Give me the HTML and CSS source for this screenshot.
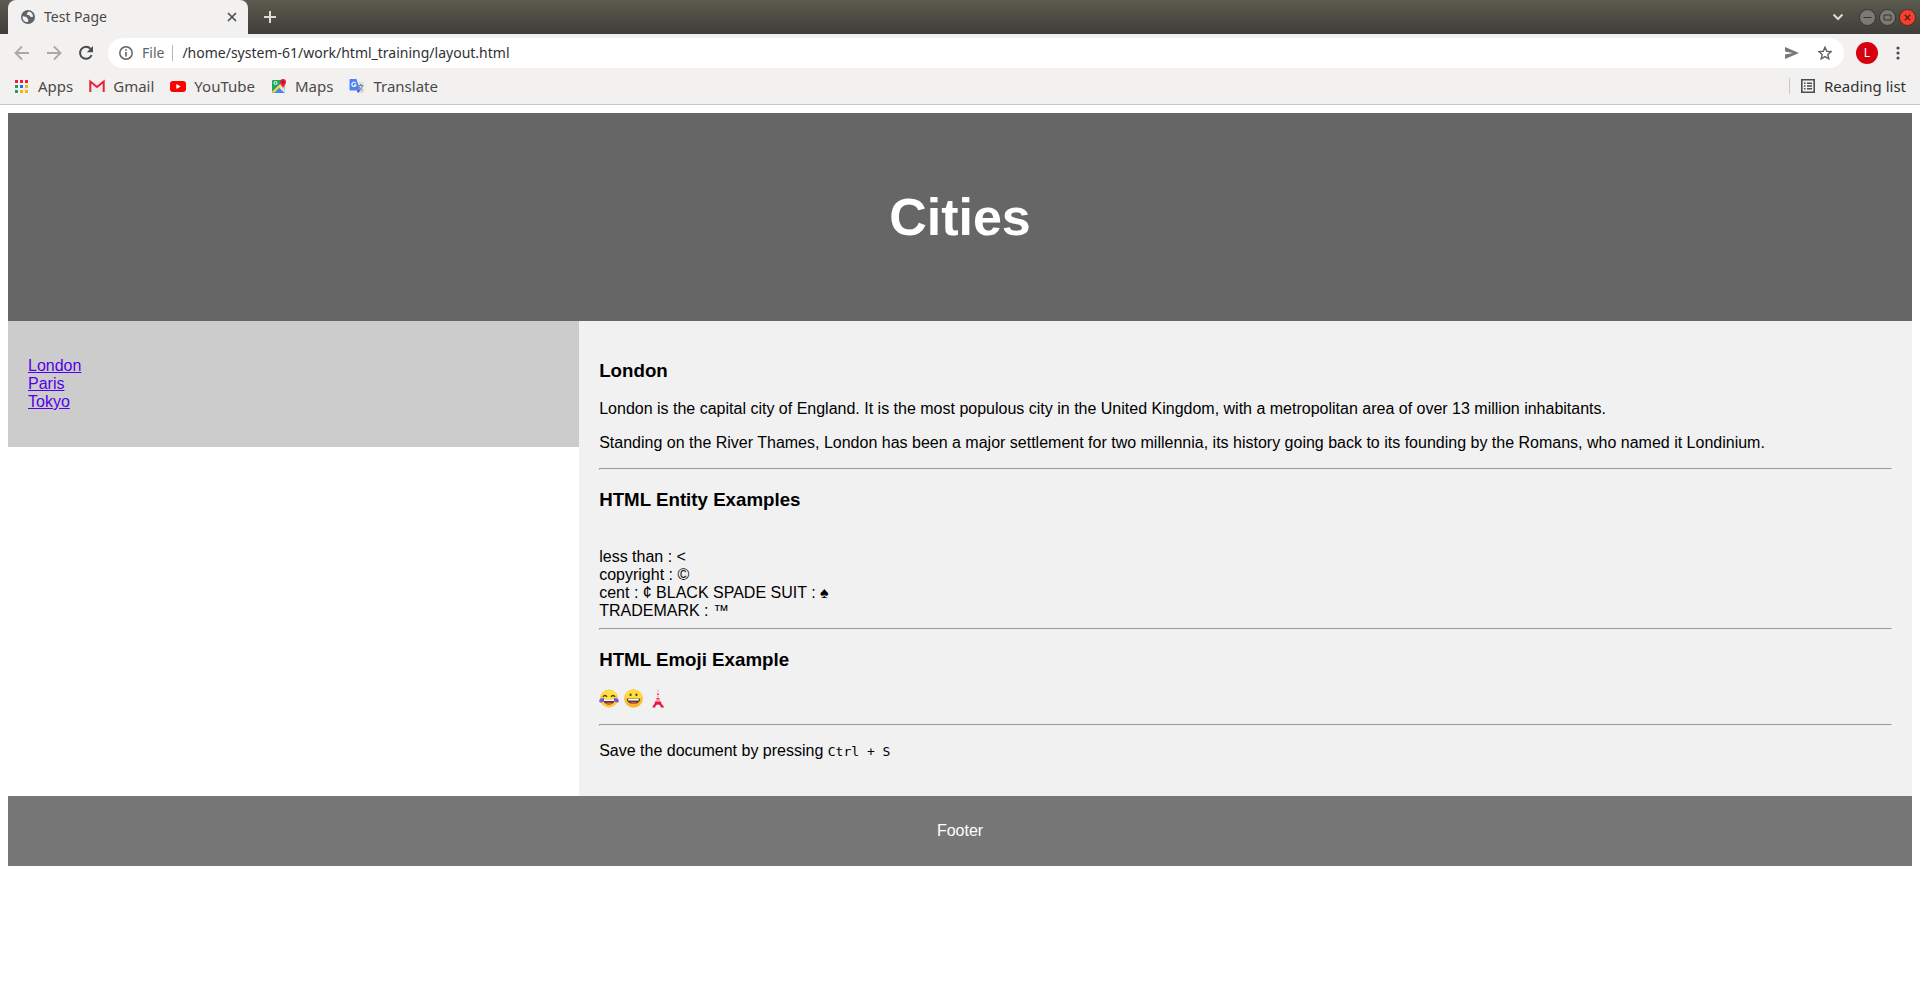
FILE: index.html
```html
<!DOCTYPE html>
<html lang="en">
<head>
<meta charset="utf-8">
<title>Test Page</title>
<link rel="stylesheet" href="styles.css">
</head>
<body>
<div class="chrome">
  <div class="tabstrip">
    <div class="tab">
      <svg class="globe" width="14" height="14" viewBox="0 0 14 14"><circle cx="7" cy="7" r="7" fill="#5f6368"/><path d="M1.6 6.2c1.2.2 2.7.5 3.8.9.9.4.5 1.6 1.5 1.9.6.3.3 1.4.1 2.9C4 12.600 1 10 1.600 6.200zM7.200 1.700c-1.100.7-.4 1.500-1.300 2.100-.5.5.2 1.300 1.100 1.200 1 .1 1.600.4 2 1.300.5 1 1.900.8 2.900.500C12.300 3.700 9.900 1.600 7.200 1.700z" fill="#f2f1f0"/></svg>
      <span class="tab-title">Test Page</span>
      <button class="bare" aria-label="Close tab"><svg width="10" height="10" viewBox="0 0 10 10"><path d="M1 1l8 8M9 1L1 9" stroke="#4a4d51" stroke-width="1.700"/></svg></button>
    </div>
    <button class="bare new-tab" aria-label="New tab"><svg width="12" height="12" viewBox="0 0 12 12"><path d="M6 0v12M0 6h12" stroke="#dfdbd2" stroke-width="2"/></svg></button>
    <div class="window-controls">
      <button class="bare search-tabs" aria-label="Search tabs"><svg width="12" height="8" viewBox="0 0 12 8"><path d="M1.500 1.500L6 6l4.500-4.500" fill="none" stroke="#dfdbd2" stroke-width="2"/></svg></button>
      <button class="bare" aria-label="Minimize"><svg width="17" height="17" viewBox="0 0 17 17"><circle cx="8.500" cy="8.500" r="8" fill="#7c7a73" stroke="#34332e"/><path d="M4.500 8.500h8" stroke="#34332e"/></svg></button>
      <button class="bare" aria-label="Maximize"><svg width="17" height="17" viewBox="0 0 17 17"><circle cx="8.500" cy="8.500" r="8" fill="#7c7a73" stroke="#34332e"/><path d="M5 6h7v5H5z" fill="none" stroke="#34332e"/></svg></button>
      <button class="bare" aria-label="Close"><svg width="17" height="17" viewBox="0 0 17 17"><circle cx="8.500" cy="8.500" r="8" fill="#f6402f" stroke="#5a251c"/><path d="M5.800 5.800l5.400 5.400M11.200 5.800l-5.400 5.400" stroke="#5c1b10" stroke-width="1.300"/></svg></button>
    </div>
  </div>
  <div class="toolbar">
    <button class="bare" aria-label="Back"><svg width="16" height="16" viewBox="0 0 16 16"><path d="M15 8H2M8 1.500L1.500 8 8 14.500" fill="none" stroke="#aaa9a7" stroke-width="1.800"/></svg></button>
    <button class="bare" aria-label="Forward"><svg width="16" height="16" viewBox="0 0 16 16"><path d="M1 8h13M8 1.500L14.500 8 8 14.500" fill="none" stroke="#aaa9a7" stroke-width="1.800"/></svg></button>
    <button class="bare" aria-label="Reload"><svg width="16" height="16" viewBox="0 0 16 16"><path d="M13.600 10.200A6 6 0 1 1 12.600 3.900" fill="none" stroke="#4a4d51" stroke-width="2"/><path d="M15 1v6.200H8.800z" fill="#4a4d51"/></svg></button>
    <div class="omnibox">
      <svg width="14" height="14" viewBox="0 0 14 14"><circle cx="7" cy="7" r="6.200" fill="none" stroke="#5f6368" stroke-width="1.500"/><path d="M7 6v4.500M7 3.300v1.500" stroke="#5f6368" stroke-width="1.600"/></svg>
      <label class="scheme" for="url">File</label>
      <input class="url" id="url" type="text" value="/home/system-61/work/html_training/layout.html">
      <button class="bare" aria-label="Send"><svg width="14" height="12" viewBox="0 0 14 12"><path d="M0 0l14 6L0 12V7.500L8 6 0 4.500z" fill="#75787b"/></svg></button>
      <button class="bare star" aria-label="Bookmark"><svg width="14" height="14" viewBox="0 0 24 24"><path d="M12 2l3 7 7.500.600-5.700 5 1.700 7.400-6.500-3.900L5.500 22l1.700-7.400-5.700-5L9 9z" fill="none" stroke="#5f6368" stroke-width="2.400"/></svg></button>
    </div>
    <button class="avatar">L</button>
    <button class="bare" aria-label="Menu"><svg width="4" height="14" viewBox="0 0 4 14"><g fill="#4a4d51"><circle cx="2" cy="2" r="1.600"/><circle cx="2" cy="7" r="1.600"/><circle cx="2" cy="12" r="1.600"/></g></svg></button>
  </div>
  <nav class="bookmarks">
    <a class="bookmark" href="#"><svg width="16" height="16" viewBox="0 0 16 16"><path d="M1 2h3v3H1zM6 2h3v3H6zM11 2h3v3h-3z" fill="#ee1b3b"/><path d="M1 7h3v3H1zM1 12h3v3H1z" fill="#1aa260"/><path d="M6 7h3v3H6z" fill="#1a73e8"/><path d="M11 7h3v3h-3zM6 12h3v3H6zM11 12h3v3h-3z" fill="#fbb103"/></svg>Apps</a>
    <a class="bookmark" href="#"><svg width="16" height="16" viewBox="0 0 16 16"><path d="M1 3h14v11H1z" fill="#ececec"/><path d="M1.300 14V3.500L8 9l6.700-5.500V14" fill="none" stroke="#ea2136" stroke-width="2"/></svg>Gmail</a>
    <a class="bookmark" href="#"><svg width="16" height="16" viewBox="0 0 16 16"><rect y="3" width="16" height="11" rx="3" fill="#f00"/><path d="M6.300 6v5l4.400-2.500z" fill="#fff"/></svg>YouTube</a>
    <a class="bookmark" href="#"><svg width="16" height="16" viewBox="0 0 16 16"><rect x="1" y="2" width="13" height="13" rx="1" fill="#20a464"/><path d="M1 14L13 3l1 11.500z" fill="#e4e4e4"/><path d="M2.500 15L8 9.500l5.500 5.500z" fill="#4286f5"/><path d="M1 14L12 3l1.500 1.500L3 15z" fill="#fbd03c"/><circle cx="4.500" cy="5" r="1.500" fill="none" stroke="#fff"/><path d="M12 11c0-3-3-4-3-7a3 3 0 0 1 6 0c0 3-3 4-3 7z" fill="#ea1d35"/><circle cx="12" cy="4" r="1" fill="#8d1020"/></svg>Maps</a>
    <a class="bookmark" href="#"><svg width="16" height="16" viewBox="0 0 16 16"><path d="M6 4h8.500v11H9z" fill="#dcdcdc"/><path d="M8.500 7.500h6M11.500 6v1.500M10 12.500c2-1 3-3 3.300-5M10 8.500c.6 2 2 3.400 3.500 4" fill="none" stroke="#76848e"/><path d="M1.500 1h6l3.500 11.500H1.500A1 1 0 0 1 .5 11.500V2a1 1 0 0 1 1-1z" fill="#4c83f5"/><path d="M8 12.500h3L9 15z" fill="#3525bd"/><path d="M6.800 5.300A2.100 2.100 0 1 0 7 7H5" fill="none" stroke="#fff" stroke-width="1.100"/></svg>Translate</a>
    <button class="bare reading-list"><svg width="14" height="14" viewBox="0 0 14 14"><path d="M.8.8h12.400v12.400H.8z" fill="none" stroke="#4a4d51" stroke-width="1.600"/><path d="M3 4.200h1.500M6 4.200h5M3 7h1.500M6 7h5M3 9.800h1.500M6 9.800h5" stroke="#4a4d51" stroke-width="1.400"/></svg>Reading list</button>
  </nav>
</div>
<div class="page">
  <header class="banner"><h2>Cities</h2></header>
  <section class="columns">
    <nav class="cities">
      <p><a href="#">London</a><br><a href="#">Paris</a><br><a href="#">Tokyo</a></p>
    </nav>
    <article class="article">
      <h3>London</h3>
      <p>London is the capital city of England. It is the most populous city in the United Kingdom, with a metropolitan area of over 13 million inhabitants.</p>
      <p>Standing on the River Thames, London has been a major settlement for two millennia, its history going back to its founding by the Romans, who named it Londinium.</p>
      <hr>
      <h3>HTML Entity Examples</h3>
      <br>
      less than : &lt;<br>
      copyright : &copy;<br>
      cent : &cent; BLACK SPADE SUIT : &spades;<br>
      TRADEMARK : &trade;
      <hr>
      <h3>HTML Emoji Example</h3>
      <p class="emoji">
        <svg width="20" height="19" viewBox="0 0 20 18" role="img" aria-label="Face with tears of joy"><circle cx="10" cy="9" r="9" fill="#fdc832"/><ellipse cx="10" cy="6" rx="7.500" ry="5.300" fill="#ffe23c"/><path d="M4 7.500c1-2 3-2 4 0M12 7.500c1-2 3-2 4 0" fill="none" stroke="#4d3a2d" stroke-width="1.300"/><path d="M4 9.500h12c0 3-2.500 5.500-6 5.500s-6-2.500-6-5.500z" fill="#55412f"/><path d="M5 9.700h10v1.800H5z" fill="#fff"/><ellipse cx="10" cy="14" rx="3" ry="1" fill="#ed4f4c"/><path d="M5 8.500C2.500 8.300 0 9.500.2 11.500c.2 2.200 3.600 2 4.300-.3zM15 8.500c2.500-.2 5 1 4.800 3-.2 2.200-3.600 2-4.300-.3z" fill="#7d58e8"/></svg>
        <svg width="19" height="19" viewBox="0 0 18 18" role="img" aria-label="Grinning face"><circle cx="9" cy="9" r="8.800" fill="#fdb52c"/><ellipse cx="9" cy="7.500" rx="7.800" ry="6.800" fill="#ffe03b"/><ellipse cx="6.200" cy="5.500" rx="1" ry="1.300" fill="#4d3a2d"/><ellipse cx="11.800" cy="5.500" rx="1" ry="1.300" fill="#4d3a2d"/><path d="M2.500 9h13c0 3.200-3 5.200-6.500 5.200S2.500 12.200 2.500 9z" fill="#55412f"/><path d="M4 9.300h10v1.600H4z" fill="#fff"/><ellipse cx="9" cy="13.200" rx="3" ry="1" fill="#ed4f4c"/></svg>
        <svg width="20" height="19" viewBox="0 0 20 18" role="img" aria-label="Tokyo tower"><path d="M9.500 0h1v3h-1z" fill="#f4a5ae"/><path d="M9 4h2v1.500H9z" fill="#f1455f"/><path d="M9 6h2l.2 2H8.800z" fill="#f6b5bd"/><path d="M8.600 8.500h2.800l.3 1.500H8.300z" fill="#ef2a4d"/><path d="M8.200 10.200h3.600l.3 1.500H7.900z" fill="#f799a5"/><path d="M7 12h6l.5 2.300 2.300 2.700v1H13c-.5-2-1.500-3-3-3s-2.500 1-3 3H4.500v-1l2-2.700z" fill="#e8163f"/></svg>
      </p>
      <hr>
      <p>Save the document by pressing <kbd>Ctrl + S</kbd></p>
    </article>
  </section>
  <footer class="footer"><p>Footer</p></footer>
</div>
</body>
</html>
```
FILE: styles.css
```css
* { box-sizing: border-box; }
body { margin: 0; background: #fff; color: #000; font: 16px/18px "Liberation Sans", Arial, sans-serif; }
svg { display: block; flex: none; }

.chrome { background: #f2f1f0; border-bottom: 1px solid #c8c8c8; color: #4a4a4a; font: 15px/20px "Noto Sans", sans-serif; }
.bare { display: flex; align-items: center; border: 0; padding: 0; background: none; color: inherit; font: inherit; }

.tabstrip { display: flex; align-items: center; height: 34px; padding: 0 4px 0 8px; background: linear-gradient(#5c5b4f, #3e3d39); }
.tab { display: flex; align-items: center; gap: 9px; width: 240px; height: 34px; padding: 0 11px 0 13px; border-radius: 8px 8px 0 0; background: #f2f1f0; }
.tab-title { flex: 1; font-size: 14px; }
.new-tab { margin-left: 16px; }
.window-controls { display: flex; align-items: center; gap: 3px; margin-left: auto; }
.search-tabs { margin-right: 12px; }

.toolbar { display: flex; align-items: center; gap: 16px; padding: 4px 20px 4px 14px; font-size: 14px; }
.omnibox { display: flex; flex: 1; align-items: center; gap: 9px; height: 30px; margin: 0 -4px 0 -2px; padding: 0 12px 0 11px; border-radius: 15px; background: #fff; }
.scheme { padding-right: 8px; border-right: 1px solid #b5b6b8; color: #5f6368; line-height: 16px; }
.url { flex: 1; min-width: 0; border: 0; padding: 0; background: none; color: #303134; font: inherit; }
.star { margin-left: 10px; }
.avatar { width: 22px; height: 22px; margin-right: 2px; border: 0; border-radius: 50%; padding: 0; background: #d6000f; color: #fff; font: 12px/22px "Noto Sans", sans-serif; }

.bookmarks { display: flex; align-items: center; gap: 16px; height: 32px; padding: 0 14px 4px; }
.bookmark { display: flex; align-items: center; gap: 8px; color: inherit; text-decoration: none; }
.reading-list { gap: 9px; height: 16px; margin-left: auto; padding-left: 11px; border-left: 1px solid #c8c8c8; color: #303134; }

.page { margin: 8px; }
.banner { padding: 30px; background: #666; color: #fff; text-align: center; }
.banner h2 { margin: 44px 0; font-size: 52px; line-height: 60px; }
.columns { display: flex; align-items: flex-start; }
.cities { width: 30%; padding: 20px; background: #ccc; }
.cities p { margin: 16px 0; }
.cities a { color: #5500e8; }
.article { width: 70%; padding: 20px; background: #f1f1f1; }
.article h3 { line-height: 22px; }
.emoji { display: flex; gap: 5px; }
kbd { font: 13px/15px "DejaVu Sans Mono", monospace; }
.footer { padding: 10px; background: #777; color: #fff; text-align: center; }
.footer p { margin: 16px 0; }
```
